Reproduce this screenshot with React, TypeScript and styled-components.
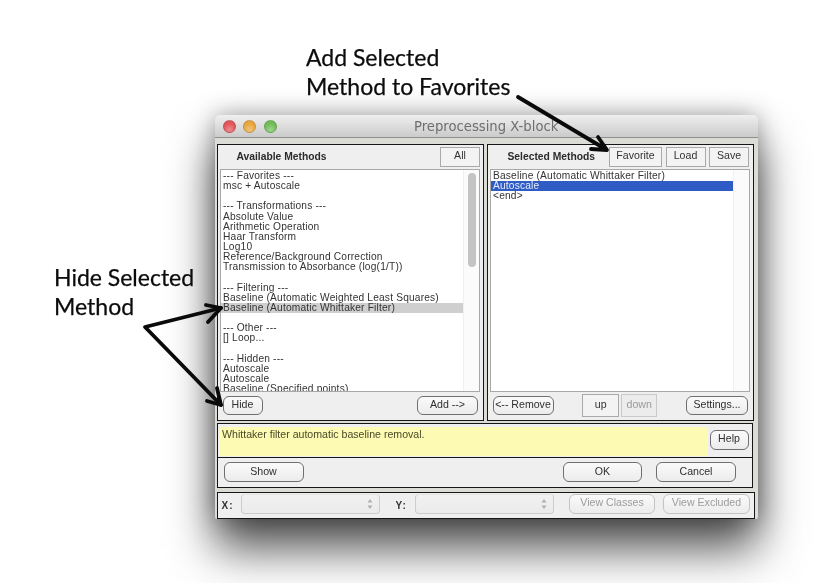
import React from "react";
import styled, { createGlobalStyle } from "styled-components";

const Global = createGlobalStyle`
  html, body { margin: 0; padding: 0; background: #fff; }
  body { font-family: "Liberation Sans", Arial, sans-serif; }
`;

const Page = styled.div`
  position: relative;
  width: 814px;
  height: 583px;
  overflow: hidden;
  background: #fff;
  padding: 115px 0 0 215px;
  box-sizing: border-box;
  filter: blur(0.3px);
`;

const Callout = styled.div<{ $x: number; $y: number }>`
  position: absolute;
  left: ${(p) => p.$x}px;
  top: ${(p) => p.$y}px;
  font: 23px/29px Lato, "Open Sans", sans-serif;
  color: #0c0c0c;
  -webkit-text-stroke: 0.25px #0c0c0c;
  white-space: pre-line;
`;

const ArrowLayer = styled.svg`
  position: absolute;
  inset: 0;
  z-index: 3;
  pointer-events: none;
`;

const Window = styled.div`
  width: 543px;
  height: 404px;
  border-radius: 5px 5px 2px 2px;
  background: #dcdcd6;
  box-shadow: 0 30px 46px rgba(0, 0, 0, 0.68), 0 0 24px rgba(0, 0, 0, 0.34);
  display: flex;
  flex-direction: column;
  overflow: hidden;
`;

const TitleBar = styled.div`
  position: relative;
  height: 23px;
  box-sizing: border-box;
  flex: none;
  display: flex;
  align-items: center;
  gap: 7.5px;
  padding-left: 7.5px;
  background: linear-gradient(#efefef, #cbcbcb);
  border-bottom: 1px solid #8f8f8f;
`;

const Light = styled.span<{ $c: string }>`
  width: 13px;
  height: 13px;
  border-radius: 50%;
  background: radial-gradient(circle at 50% 80%, #ffffff55, transparent 60%), ${(p) => p.$c};
  border: 1px solid #00000026;
  box-sizing: border-box;
`;

const Title = styled.span`
  position: absolute;
  left: 199px;
  top: 4px;
  font: 13.2px/16px "DejaVu Sans", sans-serif;
  color: #6e6e6e;
`;

const Body = styled.div`
  flex: 1;
  display: flex;
  flex-direction: column;
  padding: 6px 3px 0 2px;
`;

const Panes = styled.div`
  display: flex;
  gap: 3px;
  height: 277px;
  flex: none;
`;

const Pane = styled.section`
  width: 267px;
  height: 277px;
  box-sizing: border-box;
  border: 1.5px solid #161616;
  background: #efefef;
  display: flex;
  flex-direction: column;
  padding: 0 3px 0 1.5px;
`;

const PaneHead = styled.header<{ $pad: number }>`
  height: 23.5px;
  flex: none;
  display: flex;
  align-items: center;
  justify-content: flex-end;
  gap: 3.5px;
  padding: 0 ${(p) => p.$pad}px 0 0;
  position: relative;
`;

const PaneTitle = styled.b<{ $x: number }>`
  position: absolute;
  left: ${(p) => p.$x}px;
  top: 6px;
  font: bold 10.3px/12px "Liberation Sans", sans-serif;
  color: #2b2b2b;
`;

const SquareBtn = styled.button<{ $w: number; $muted?: boolean; $h?: number }>`
  width: ${(p) => p.$w}px;
  height: ${(p) => p.$h ?? 20}px;
  padding: 0 0 3px;
  box-sizing: border-box;
  border: 1px solid ${(p) => (p.$muted ? "#c9c9c9" : "#a9a9a9")};
  background: ${(p) => (p.$muted ? "#ececec" : "#f3f3f3")};
  color: ${(p) => (p.$muted ? "#9a9a9a" : "#333")};
  font: 10.6px/12px "Liberation Sans", sans-serif;
`;

const List = styled.div`
  height: 223px;
  flex: none;
  box-sizing: border-box;
  border: 1px solid #a8a8a8;
  background: #fff;
  display: flex;
  overflow: hidden;
`;

const Rows = styled.div`
  flex: 1;
  min-width: 0;
  padding-top: 1.5px;
  overflow: hidden;
`;

const Row = styled.div<{ $state?: "sel" | "soft" }>`
  height: 10.15px;
  line-height: 10.8px;
  padding-left: 2.5px;
  font-size: 10.2px;
  letter-spacing: 0.18px;
  white-space: pre;
  color: ${(p) => (p.$state === "sel" ? "#e9eefc" : "#333")};
  background: ${(p) => (p.$state === "sel" ? "#2f5cc4" : p.$state === "soft" ? "#cfcfcf" : "transparent")};
`;

const Gutter = styled.div`
  width: 16px;
  flex: none;
  background: #fbfbfb;
  border-left: 1px solid #f0f0f0;
  padding: 3px 0 0 4px;
  box-sizing: border-box;
`;

const Thumb = styled.div`
  width: 8px;
  height: 94px;
  border-radius: 4px;
  background: #c4c4c4;
`;

const PaneFoot = styled.div`
  flex: 1;
  display: flex;
  align-items: center;
  justify-content: space-between;
  padding: 0 2px 1px 3px;
`;

const Group = styled.div<{ $gap: number }>`
  display: flex;
  gap: ${(p) => p.$gap}px;
`;

const RoundBtn = styled.button<{ $w: number; $h?: number; $off?: boolean }>`
  width: ${(p) => p.$w}px;
  height: ${(p) => p.$h ?? 19}px;
  padding: 0 0 3px;
  box-sizing: border-box;
  border-radius: 6px;
  border: 1px solid ${(p) => (p.$off ? "#c4c4c4" : "#6f6f6f")};
  border-bottom-width: ${(p) => (p.$off ? 1 : 1.5)}px;
  background: linear-gradient(#fafafa, #ececec);
  color: ${(p) => (p.$off ? "#9c9c9c" : "#2f2f2f")};
  font: 10.6px/12px "Liberation Sans", sans-serif;
`;

const HelpBar = styled.div`
  height: 35px;
  margin-top: 2px;
  flex: none;
  box-sizing: border-box;
  border: 1.5px solid #161616;
  background: #efefef;
  display: flex;
  padding-top: 2.5px;
  width: 536px;
`;

const Note = styled.div`
  width: 489px;
  margin-left: 1px;
  height: 29px;
  background: #fdfab4;
  color: #4a4a28;
  font-size: 10.6px;
  line-height: 12px;
  padding: 1.5px 0 0 3px;
  box-sizing: border-box;
`;

const HelpSlot = styled.div`
  flex: 1;
  display: flex;
  justify-content: flex-end;
  padding: 3px 3.5px 0 0;
`;

const Actions = styled.div`
  height: 29.5px;
  width: 536px;
  flex: none;
  box-sizing: border-box;
  border: 1.5px solid #161616;
  border-top: none;
  background: #efefef;
  display: flex;
  align-items: center;
  justify-content: space-between;
  padding: 0 16px 0 5.5px;
`;

const Bottom = styled.div`
  margin-top: 4.5px;
  width: 538px;
  height: 27px;
  flex: none;
  box-sizing: border-box;
  border: 1.5px solid #161616;
  background: #efefef;
  display: flex;
  align-items: center;
  padding: 0 4px 4px 3.5px;
`;

const Axis = styled.b`
  font: bold 10px/12px "Liberation Sans", sans-serif;
  letter-spacing: 1px;
  color: #333;
  width: 19px;
  flex: none;
  margin-top: 4px;
`;

const Select = styled.div<{ $gap: number }>`
  width: 139px;
  height: 20px;
  flex: none;
  margin-right: ${(p) => p.$gap}px;
  box-sizing: border-box;
  border: 1px solid #cdcdcd;
  border-top-color: #e2e2e2;
  border-radius: 4px;
  background: linear-gradient(#f1f1f1, #ebebeb);
  display: flex;
  align-items: center;
  justify-content: flex-end;
  padding-right: 6px;
`;

const Stepper = () => (
  <svg width="6" height="12" viewBox="0 0 6 12">
    <path d="M3 1 L5.5 4.5 H.5 Z M3 11 L5.5 7.5 H.5 Z" fill="#b0b0b0" />
  </svg>
);

const Spacer = styled.div`
  flex: 1;
`;

const Arrow = ({ d }: { d: string }) => (
  <path d={d} fill="none" stroke="#0a0a0a" strokeWidth="3.8" strokeLinecap="round" strokeLinejoin="round" />
);

const available: Array<[string, ("soft" | undefined)?]> = [
  ["--- Favorites ---"],
  ["msc + Autoscale"],
  [""],
  ["--- Transformations ---"],
  ["Absolute Value"],
  ["Arithmetic Operation"],
  ["Haar Transform"],
  ["Log10"],
  ["Reference/Background Correction"],
  ["Transmission to Absorbance (log(1/T))"],
  [""],
  ["--- Filtering ---"],
  ["Baseline (Automatic Weighted Least Squares)"],
  ["Baseline (Automatic Whittaker Filter)", "soft"],
  [""],
  ["--- Other ---"],
  ["[] Loop..."],
  [""],
  ["--- Hidden ---"],
  ["Autoscale"],
  ["Autoscale"],
  ["Baseline (Specified points)"],
];

export default function App() {
  return (
    <Page>
      <Global />
      <Callout $x={306} $y={43}>{"Add Selected\nMethod to Favorites"}</Callout>
      <Callout $x={54} $y={263}>{"Hide Selected\nMethod"}</Callout>

      <Window>
        <TitleBar>
          <Light $c="#e2555c" />
          <Light $c="#e8a63e" />
          <Light $c="#70bd58" />
          <Title>Preprocessing X-block</Title>
        </TitleBar>
        <Body>
          <Panes>
            <Pane>
              <PaneHead $pad={0}>
                <PaneTitle $x={17}>Available Methods</PaneTitle>
                <SquareBtn $w={40}>All</SquareBtn>
              </PaneHead>
              <List>
                <Rows>
                  {available.map(([t, s], i) => (
                    <Row key={i} $state={s}>{t}</Row>
                  ))}
                </Rows>
                <Gutter><Thumb /></Gutter>
              </List>
              <PaneFoot>
                <RoundBtn $w={40}>Hide</RoundBtn>
                <RoundBtn $w={61}>{"Add -->"}</RoundBtn>
              </PaneFoot>
            </Pane>
            <Pane>
              <PaneHead $pad={1}>
                <PaneTitle $x={18}>Selected Methods</PaneTitle>
                <SquareBtn $w={53}>Favorite</SquareBtn>
                <SquareBtn $w={40}>Load</SquareBtn>
                <SquareBtn $w={40}>Save</SquareBtn>
              </PaneHead>
              <List>
                <Rows>
                  <Row>Baseline (Automatic Whittaker Filter)</Row>
                  <Row $state="sel">Autoscale</Row>
                  <Row>{"<end>"}</Row>
                </Rows>
                <Gutter />
              </List>
              <PaneFoot>
                <RoundBtn $w={61}>{"<-- Remove"}</RoundBtn>
                <Group $gap={2}>
                  <SquareBtn $w={37} $h={23}>up</SquareBtn>
                  <SquareBtn $w={36} $h={23} $muted>down</SquareBtn>
                </Group>
                <RoundBtn $w={62}>Settings...</RoundBtn>
              </PaneFoot>
            </Pane>
          </Panes>
          <HelpBar>
            <Note>Whittaker filter automatic baseline removal.</Note>
            <HelpSlot><RoundBtn $w={39} $h={20}>Help</RoundBtn></HelpSlot>
          </HelpBar>
          <Actions>
            <RoundBtn $w={80} $h={20}>Show</RoundBtn>
            <Group $gap={14}>
              <RoundBtn $w={79} $h={20}>OK</RoundBtn>
              <RoundBtn $w={80} $h={20}>Cancel</RoundBtn>
            </Group>
          </Actions>
          <Bottom>
            <Axis>X:</Axis>
            <Select $gap={16}><Stepper /></Select>
            <Axis>Y:</Axis>
            <Select $gap={0}><Stepper /></Select>
            <Spacer />
            <Group $gap={8}>
              <RoundBtn $w={86} $h={20} $off>View Classes</RoundBtn>
              <RoundBtn $w={87} $h={20} $off>View Excluded</RoundBtn>
            </Group>
          </Bottom>
        </Body>
      </Window>

      <ArrowLayer width="814" height="583" viewBox="0 0 814 583">
        <Arrow d="M518 97 L607 150 M591 149 L607 150 L598 137" />
        <Arrow d="M221 308 L145 327 L221 405" />
        <Arrow d="M206 305 L221 308 L208 322" />
        <Arrow d="M207 401 L221 405 L217 388" />
      </ArrowLayer>
    </Page>
  );
}
